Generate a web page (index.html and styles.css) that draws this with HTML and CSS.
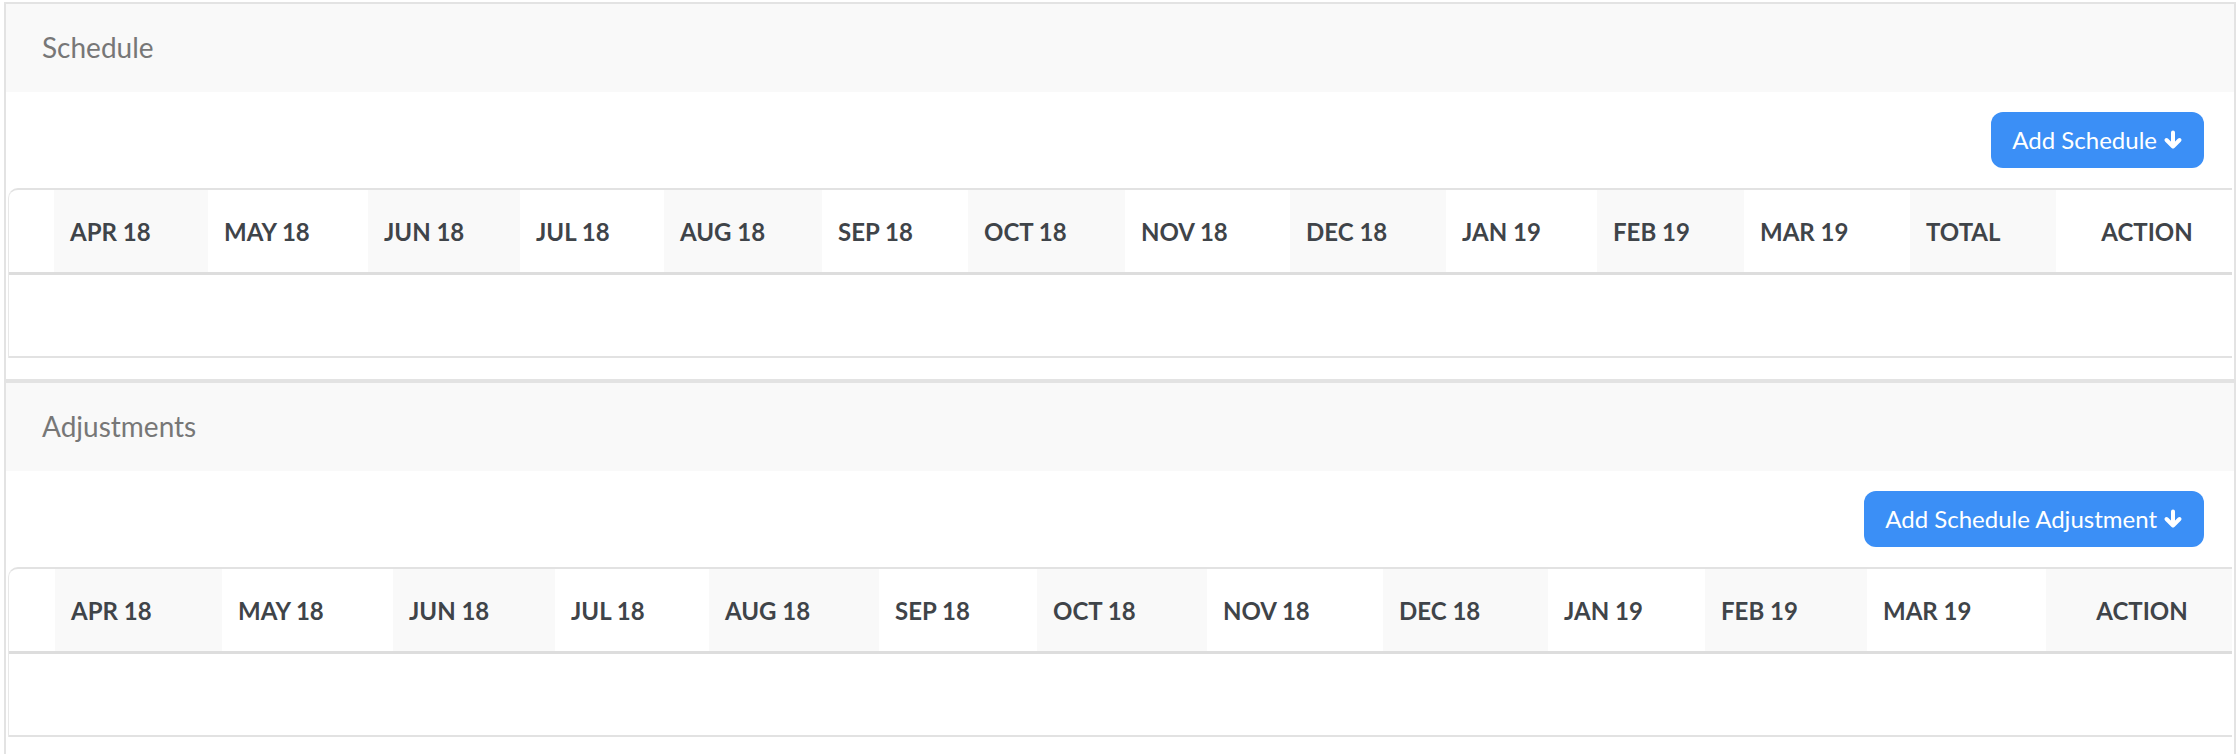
FILE: index.html
```html
<!DOCTYPE html>
<html lang="en">
<head>
<meta charset="utf-8">
<title>Schedule</title>
<link rel="stylesheet" href="styles.css">
</head>
<body>
<section class="card">
  <header class="card-head"><h2 class="card-title">Schedule</h2></header>
  <div class="toolbar">
    <button class="btn" type="button">Add Schedule
      <svg class="arrow" viewBox="0 0 20 20" width="20" height="20" aria-hidden="true"><path d="M10 2.5V16.5M3.5 10L10 16.5L16.5 10"/></svg>
    </button>
  </div>
  <div class="table-wrap">
    <table class="grid grid-sched">
      <colgroup><col><col><col><col><col><col><col><col><col><col><col><col><col><col><col></colgroup>
      <thead>
        <tr>
          <th></th><th>APR 18</th><th>MAY 18</th><th>JUN 18</th><th>JUL 18</th><th>AUG 18</th><th>SEP 18</th><th>OCT 18</th><th>NOV 18</th><th>DEC 18</th><th>JAN 19</th><th>FEB 19</th><th>MAR 19</th><th>TOTAL</th><th class="center">ACTION</th>
        </tr>
      </thead>
      <tbody>
        <tr><td colspan="15"></td></tr>
      </tbody>
    </table>
  </div>
</section>
<section class="card">
  <header class="card-head"><h2 class="card-title">Adjustments</h2></header>
  <div class="toolbar">
    <button class="btn" type="button">Add Schedule Adjustment
      <svg class="arrow" viewBox="0 0 20 20" width="20" height="20" aria-hidden="true"><path d="M10 2.5V16.5M3.5 10L10 16.5L16.5 10"/></svg>
    </button>
  </div>
  <div class="table-wrap">
    <table class="grid grid-adj">
      <colgroup><col><col><col><col><col><col><col><col><col><col><col><col><col><col></colgroup>
      <thead>
        <tr>
          <th></th><th>APR 18</th><th>MAY 18</th><th>JUN 18</th><th>JUL 18</th><th>AUG 18</th><th>SEP 18</th><th>OCT 18</th><th>NOV 18</th><th>DEC 18</th><th>JAN 19</th><th>FEB 19</th><th>MAR 19</th><th class="center">ACTION</th>
        </tr>
      </thead>
      <tbody>
        <tr><td colspan="14"></td></tr>
      </tbody>
    </table>
  </div>
</section>
</body>
</html>
```

FILE: styles.css
```css
html {
  overflow: hidden;
}

body {
  margin: 0;
  padding: 2px 2px 0 4px;
  background: #ffffff;
  font-family: Lato, "Open Sans", "Liberation Sans", sans-serif;
}

.card {
  border: 2px solid #e3e3e3;
  background: #ffffff;
  padding: 0 2px 21px 0;
}

.card-head {
  height: 88px;
  display: flex;
  align-items: center;
  padding-left: 36px;
  background: #f9f9f9;
  margin-right: -2px;
}

.card-title {
  margin: 0 0 2px 0;
  font-size: 28px;
  font-weight: 400;
  color: #777777;
  line-height: 1;
}

.toolbar {
  display: flex;
  justify-content: flex-end;
  padding: 20px 28px 20px 0;
}

.btn {
  display: inline-flex;
  align-items: center;
  gap: 6px;
  height: 56px;
  padding: 0 21px 0 21px;
  border: none;
  border-radius: 12px;
  background: #3b8ff6;
  color: #ffffff;
  font-family: Lato, "Open Sans", "Liberation Sans", sans-serif;
  font-size: 24px;
  font-weight: 400;
  line-height: 1;
}

.arrow {
  width: 20px;
  height: 20px;
  fill: none;
  stroke: #ffffff;
  stroke-width: 4;
  stroke-linecap: round;
  stroke-linejoin: round;
}

.table-wrap {
  margin-left: 2px;
  border-top: 2px solid #e2e2e2;
  border-left: 1px solid #e8e8e8;
  border-top-left-radius: 10px;
  overflow: hidden;
}

.grid {
  width: 2223px;
  table-layout: fixed;
  border-collapse: collapse;
}

.grid th {
  height: 82px;
  padding: 0 0 0 16px;
  text-align: left;
  font-size: 24px;
  font-weight: 700;
  color: #3f4449;
  white-space: nowrap;
  border-bottom: 3px solid #dddddd;
}

.grid th:nth-child(even) {
  background: #f9f9f9;
}

.grid th.center {
  text-align: center;
  padding: 0 0 0 6px;
}

.grid td {
  height: 81px;
  padding: 0;
  border-bottom: 2px solid #e2e2e2;
}

.grid-sched col:nth-child(1) { width: 45px; }
.grid-sched col:nth-child(2) { width: 154px; }
.grid-sched col:nth-child(3) { width: 160px; }
.grid-sched col:nth-child(4) { width: 152px; }
.grid-sched col:nth-child(5) { width: 144px; }
.grid-sched col:nth-child(6) { width: 158px; }
.grid-sched col:nth-child(7) { width: 146px; }
.grid-sched col:nth-child(8) { width: 157px; }
.grid-sched col:nth-child(9) { width: 165px; }
.grid-sched col:nth-child(10) { width: 156px; }
.grid-sched col:nth-child(11) { width: 151px; }
.grid-sched col:nth-child(12) { width: 147px; }
.grid-sched col:nth-child(13) { width: 166px; }
.grid-sched col:nth-child(14) { width: 146px; }
.grid-sched col:nth-child(15) { width: 176px; }

.grid-adj col:nth-child(1) { width: 46px; }
.grid-adj col:nth-child(2) { width: 167px; }
.grid-adj col:nth-child(3) { width: 171px; }
.grid-adj col:nth-child(4) { width: 162px; }
.grid-adj col:nth-child(5) { width: 154px; }
.grid-adj col:nth-child(6) { width: 170px; }
.grid-adj col:nth-child(7) { width: 158px; }
.grid-adj col:nth-child(8) { width: 170px; }
.grid-adj col:nth-child(9) { width: 176px; }
.grid-adj col:nth-child(10) { width: 165px; }
.grid-adj col:nth-child(11) { width: 157px; }
.grid-adj col:nth-child(12) { width: 162px; }
.grid-adj col:nth-child(13) { width: 179px; }
.grid-adj col:nth-child(14) { width: 186px; }
```
